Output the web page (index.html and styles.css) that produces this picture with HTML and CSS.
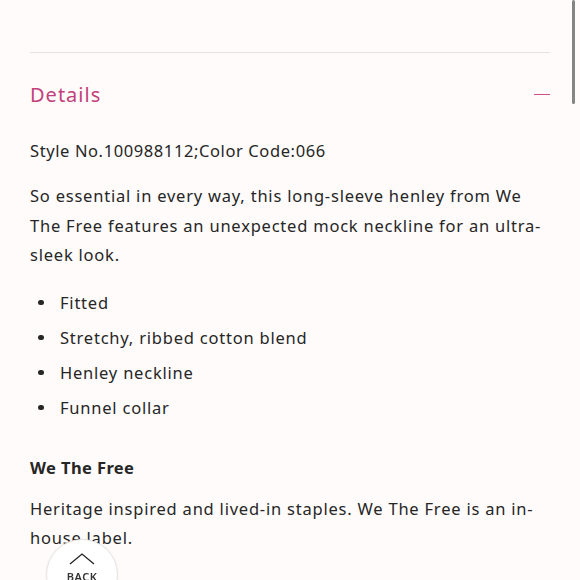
FILE: index.html
```html
<!DOCTYPE html>
<html>
<head>
<meta charset="utf-8">
<link rel="stylesheet" href="styles.css">
</head>
<body>
<div class="page">
  <hr class="divider">
  <div class="acc-head">
    <h2 class="acc-title">Details</h2>
    <span class="acc-minus"></span>
  </div>
  <div class="acc-body">
    <p class="style-no">Style No.100988112;Color Code:066</p>
    <p class="desc">So essential in every way, this long-sleeve henley from We The Free features an unexpected mock neckline for an ultra-sleek look.</p>
    <ul class="features">
      <li>Fitted</li>
      <li>Stretchy, ribbed cotton blend</li>
      <li>Henley neckline</li>
      <li>Funnel collar</li>
    </ul>
    <h3 class="brand">We The Free</h3>
    <p class="desc">Heritage inspired and lived-in staples. We The Free is an in-house label.</p>
  </div>
</div>
<div class="scrollbar"></div>
<button class="back">
  <svg class="back-icon" width="26" height="12" viewBox="0 0 26 12"><path d="M1 11 L13 1 L25 11" fill="none" stroke="#222" stroke-width="1.3"/></svg>
  <span class="back-label">BACK</span>
</button>
</body>
</html>
```
FILE: styles.css
```css
html, body {
  margin: 0;
  padding: 0;
  background: #fefbfa;
  overflow: hidden;
}
.page {
  padding: 52px 30px 0 30px;
  font-family: "Noto Sans", sans-serif;
  color: #262626;
}
.divider {
  border: 0;
  border-top: 1px solid #e4e1e0;
  margin: 0;
}
.acc-head {
  display: flex;
  align-items: center;
  justify-content: space-between;
  height: 83px;
}
.acc-title {
  margin: 0;
  font-weight: 400;
  font-size: 20px;
  letter-spacing: 1px;
  color: #c23f7a;
}
.acc-minus {
  width: 16px;
  height: 1.5px;
  background: #c9508a;
}
.acc-body {
  font-size: 16.5px;
  letter-spacing: 0.78px;
}
.style-no {
  margin: 0 0 15px 0;
  line-height: 30px;
  letter-spacing: 0.6px;
}
.desc {
  margin: 0;
  line-height: 29.5px;
}
.features {
  list-style: none;
  margin: 15px 0 0 0;
  padding: 0 0 0 30px;
  line-height: 35px;
}
.features li {
  position: relative;
}
.features li::before {
  content: "";
  position: absolute;
  left: -22px;
  top: 15px;
  width: 5.5px;
  height: 5.5px;
  border-radius: 50%;
  background: #262626;
}
.brand {
  margin: 28px 0 11px 0;
  font-size: 16.5px;
  font-weight: 700;
  letter-spacing: 0.4px;
  line-height: 30px;
}
.scrollbar {
  position: fixed;
  top: 0;
  right: 5px;
  width: 3px;
  height: 104px;
  border-radius: 2px;
  background: #858585;
}
.back {
  position: fixed;
  left: 46px;
  top: 539px;
  width: 72px;
  height: 72px;
  border-radius: 50%;
  background: #fff;
  border: 1px solid #e6e3e2;
  box-shadow: 0 0 3px rgba(0,0,0,0.06);
  padding: 13px 0 0 0;
  display: flex;
  flex-direction: column;
  align-items: center;
  gap: 4px;
  font-family: "Noto Sans", sans-serif;
}
.back-icon {
  display: block;
}
.back-label {
  font-size: 11px;
  font-weight: 600;
  letter-spacing: 0.5px;
  color: #333;
}
```
